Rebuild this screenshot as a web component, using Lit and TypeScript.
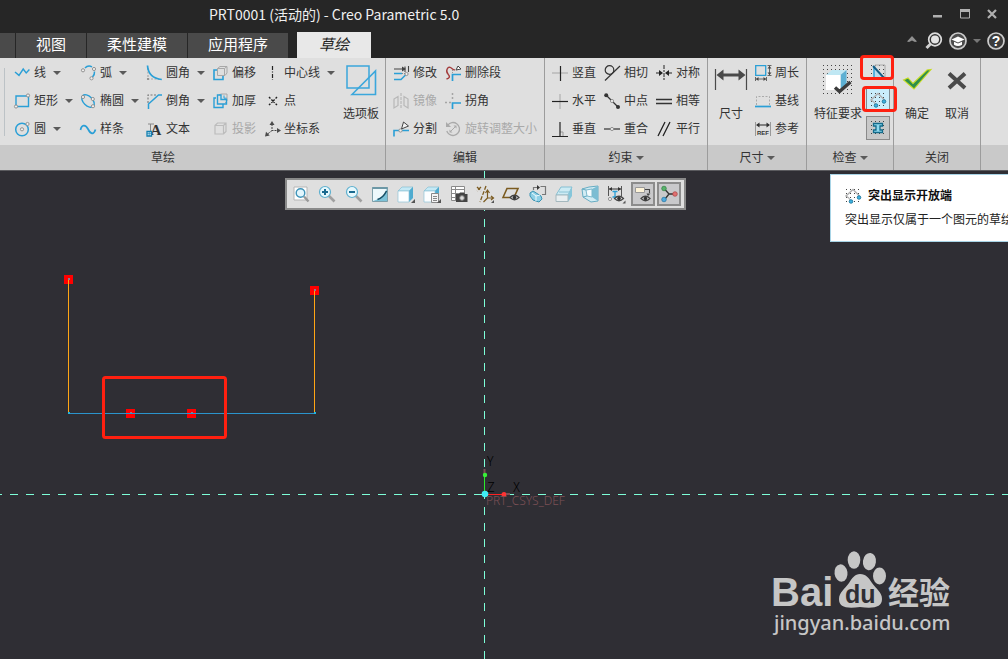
import { LitElement, html, svg, css, nothing } from "lit";
import { customElement } from "lit/decorators.js";
import { classMap } from "lit/directives/class-map.js";

const BLUE = "#2a9fd6";
const GREY = "#a8a8a8";
const DARK = "#4a4a4a";

const handle = (x: number, y: number) =>
  svg`<circle cx=${x} cy=${y} r="1.6" fill="#eee" stroke="#8a8a8a" stroke-width="0.9"/>`;

const dots = (n: number, step: number, start = 1) => {
  const out = [];
  for (let r = 0; r < n; r++)
    for (let c = 0; c < n; c++)
      out.push(svg`<rect x=${start + c * step} y=${start + r * step} width="1" height="1" fill="#444"/>`);
  return out;
};

const openEnds = svg`${dots(4, 4, 1)}
  <path d="M3 9.5 1 8 8 1.5 14 7.5V9" fill="none" stroke="#b0b0b0" stroke-width="1.4"/>
  <path d="M3 9l3 4" stroke="#b0b0b0" stroke-width="1.2"/>
  <circle cx="6" cy="13.5" r="1.8" fill="#3fb2e0" stroke="#156f96" stroke-width="0.8"/>
  <circle cx="14" cy="9.5" r="1.8" fill="#3fb2e0" stroke="#156f96" stroke-width="0.8"/>`;

const cube = svg`<path d="M1 5 5 1h11l-4 4z" fill="#c5e9f5" stroke="#7ab9cf" stroke-width="0.6"/>
  <path d="M12 5l4-4v11l-4 4z" fill="#4fabcf"/>
  <path d="M1 5h11v11H1z" fill="#fcfeff" stroke="#8fc4d8" stroke-width="0.7"/>`;

const more = svg`<path d="M18 14v4h-4z" fill="#555"/>`;
const eye = (x: number, y: number) => svg`<g transform="translate(${x} ${y})">
  <path d="M0 3.5Q4.5-1 9 3.5 4.5 8 0 3.5z" fill="#ddd" stroke="#444" stroke-width="1.2"/>
  <circle cx="4.5" cy="3.5" r="1.8" fill="#333"/></g>`;

const icons: Record<string, unknown> = {
  line: svg`<path d="M1 7l4 3.4L9.2 4l3 4 3.2-3.4" fill="none" stroke=${BLUE} stroke-width="1.4"/>`,
  rect: svg`<path d="M2 3h12.5v10.5H2z" fill="none" stroke=${BLUE} stroke-width="1.4"/>${handle(14, 2.5)}${handle(2, 13.5)}`,
  circle: svg`<circle cx="8" cy="8.5" r="6.3" fill="none" stroke=${BLUE} stroke-width="1.5"/>${handle(8, 8.3)}${handle(13.5, 3)}`,
  arc: svg`<path d="M5 3C7 .8 10 .8 12 1.800M14.500 6.500C14.800 9 13.800 10.500 12.500 12" fill="none" stroke=${BLUE} stroke-width="1.5"/>
    ${handle(3, 5.3)}${handle(14, 4)}${handle(11.5, 13.3)}`,
  ellipse: svg`<ellipse cx="8" cy="8" rx="7.6" ry="4.6" transform="rotate(45 8 8)" fill="none" stroke=${BLUE} stroke-width="1.4"/>
    ${handle(3, 4)}${handle(13, 13.2)}${handle(12.8, 6)}`,
  spline: svg`<path d="M.5 9C1.5 3.5 5.5 3 8 8s5.500 6.500 7.500.5" fill="none" stroke=${BLUE} stroke-width="1.7"/>`,
  fillet: svg`<path d="M2 3v11h11" fill="none" stroke=${GREY} stroke-width="1.2" stroke-dasharray="2 1.5"/>
    <path d="M1.5.5C2 8.5 7 13.5 15.8 14.5" fill="none" stroke=${BLUE} stroke-width="1.7"/>
    <circle cx="2" cy="14" r="1.1" fill="#888"/>`,
  chamfer: svg`<path d="M2 10V2h9" fill="none" stroke="#777" stroke-width="1.1" stroke-dasharray="2 1.5"/>
    <path d="M16 2h-3.500L2.500 11v5" fill="none" stroke=${BLUE} stroke-width="1.5"/>`,
  text: svg`<path d="M2 3h6M4.500 3v8" fill="none" stroke="#888" stroke-width="1"/>
    <text x="4.5" y="13.5" font-family="Liberation Serif, serif" font-weight="700" font-size="15" fill="#333">A</text>
    <path d="M1 10.500h4.500V15H1z" fill="#eaf8ff" stroke="#127fb0" stroke-width="1.3"/><path d="M3.200 10.500V15M1 12.700h4.500" stroke="#127fb0" stroke-width=".7"/>`,
  offset: svg`<path d="M5.500 3.500 8 1.500h7v6.500l-2 2.500H5.500zM5.500 3.500h7v7M12.500 3.500 15 1.500" fill="none" stroke=${GREY}/>
    <path d="M5 5H2v9.500h9V11" fill="none" stroke=${BLUE} stroke-width="1.6"/>`,
  thicken: svg`<path d="M7 2 9 1h6v7l-2 2" fill="none" stroke=${GREY}/>
    <path d="M4 5H2v9.500h9v-3M9 2H5.500v9h9V6.500H9z" fill="none" stroke=${BLUE} stroke-width="1.4"/>
    <path d="M12 2.500v2.700h2.700" fill="none" stroke=${BLUE}/>`,
  project: svg`<path d="M3 4.500 5.500 2H14v8.500L11.500 13H3zM3 4.500h8.500V13M11.500 4.500 14 2" fill="none" stroke="#bcbcbc" stroke-width="1.2"/>`,
  centerline: svg`<path d="M8.500 1v14" stroke="#222" stroke-width="1.2" stroke-dasharray="4 1.5 1 1.5"/>`,
  point: svg`<path d="M5 4l8 8M13 4l-8 8" stroke="#222" stroke-width="1.4" stroke-dasharray="2 1.4 4.6 1.4"/>`,
  csys: svg`<path d="M8 3v6.500h5M8 9.500l-5 4" fill="none" stroke="#444" stroke-dasharray="2 1"/>
    <path d="M8 0l2.500 4h-5zM17 9.500l-4-2.500v5zM1 15.500l1-4.700 3.700 3.700z" fill=${DARK}/>`,
  modify: svg`<path d="M1 4h11M12 1.500v5.500M15.500 1v6" stroke="#444" stroke-width="1.1"/><path d="M9 1.500 13 4 9 6.500z" fill="#444"/>
    <path d="M1 8.500h8M1 14.500h7l5-5" fill="none" stroke=${BLUE} stroke-width="1.5"/><path d="M9 8.500h6" stroke="#888" stroke-dasharray="1 1"/>${handle(13.5, 9)}`,
  mirror: svg`<path d="M1 6l4-2.500v9L1 15zM15 6l-4-2.500v9L15 15z" fill="none" stroke="#b8b8b8" stroke-width="1.2"/><path d="M8 0v16" stroke="#b0b0b0" stroke-dasharray="3 1"/>`,
  divide: svg`<path d="M1 15.500V9.500h5M9 9.500h7" fill="none" stroke=${BLUE} stroke-width="1.6"/>
    <path d="M8.500 8l2-7 5 4z" fill="#f3f3f3" stroke="#444"/>${handle(7.5, 9.5)}`,
  delseg: svg`<path d="M1.500 14c3-1 4-2 1.500-5-3-3 0-8 2.500-6.500 2 1.200 3 3 4.500 2.200" fill="none" stroke="#a33c3c" stroke-width="1.4"/>
    <path d="M11 5l2-4 3 3z" fill="#fff" stroke="#444"/><path d="M7.500 16V9.500H16" fill="none" stroke=${BLUE} stroke-width="1.7"/><path d="M7.500 8V4" stroke="#999" stroke-dasharray="1 1"/>`,
  corner: svg`<path d="M0 9.500h6M7.500 0v8" stroke="#a5a5a5" stroke-width="1.5" stroke-dasharray="2 2"/><path d="M7.500 16V10H16" fill="none" stroke=${BLUE} stroke-width="1.7"/>`,
  rotate: svg`<circle cx="8" cy="8" r="6.5" fill="none" stroke="#aaa" stroke-width="1.3" stroke-dasharray="34 7" transform="rotate(215 8 8)"/>
    <path d="M1 1v5h5z" fill="#aaa"/><path d="M5.500 10.500l5-5" stroke="#aaa"/><path d="M8.500 4.500h3v3zM4.500 8.500v3h3z" fill="#aaa"/>`,
  vertical: svg`<path d="M0 8h16" stroke="#b8b8b8" stroke-width="1.5"/><path d="M8.500 1v15" stroke="#222" stroke-width="1.2"/>`,
  horizontal: svg`<path d="M8 1v15" stroke="#b8b8b8" stroke-width="1.5"/><path d="M0 8.500h16" stroke="#222" stroke-width="1.2"/>`,
  perp: svg`<path d="M8 11h3v4" fill="none" stroke="#999"/><path d="M8 1v14M0 15.500h16" stroke="#222" stroke-width="1.2"/>`,
  tangent: svg`<circle cx="5.5" cy="5" r="4.3" fill="none" stroke="#333" stroke-width="1.2"/><path d="M1 15.500 16 1" stroke="#333" stroke-width="1.2"/>`,
  midpoint: svg`<path d="M2 2l12 12" stroke="#333" stroke-width="1.2"/><circle cx="2.2" cy="2.2" r="2" fill="#333"/><circle cx="14" cy="14" r="2" fill="#333"/>${handle(8, 8)}`,
  coincident: svg`<path d="M0 8h16" stroke="#333" stroke-width="1.2"/>${handle(8, 8)}`,
  symmetric: svg`<path d="M8 0v16" stroke="#222" stroke-dasharray="4 1 2 1"/><path d="M0 8h4M12 8h4" stroke="#222" stroke-width="1.2"/><path d="M3 5l4 3-4 3zM13 5 9 8l4 3z" fill="#222"/>`,
  equal: svg`<path d="M0 6.500h16M0 10.500h16" stroke="#333" stroke-width="1.3"/>`,
  parallel: svg`<path d="M2 15 9 1M7 15l7-14" stroke="#222" stroke-width="1.3"/>`,
  perimeter: svg`<path d="M.7.700h10v9.600H.7z" fill="none" stroke=${BLUE} stroke-width="1.3"/>
    <path d="M14.500 1v9M12.500.5h4M12.500 10.500h4M1 14h10M.5 12v4M11.500 12v4" stroke="#666"/><path d="M14.500 1l2 2.500h-4zM14.500 10l2-2.500h-4zM1 14l2.500-2v4zM11 14l-2.500-2v4z" fill="#444"/>`,
  baseline: svg`<path d="M1.500 12V3.500h13V12" fill="none" stroke="#aaa" stroke-dasharray="2 1.5"/><path d="M0 13.500h16" stroke=${BLUE} stroke-width="1.7"/>`,
  ref: svg`<path d="M.5 1v14M15.500 1v14" stroke="#999"/><path d="M2 4h12" stroke="#333" stroke-width="1.1"/><path d="M1 4l3.500-2.500v5zM15 4l-3.500-2.500v5z" fill="#333"/>
    <text x="8" y="14" text-anchor="middle" font-family="Liberation Sans, sans-serif" font-weight="700" font-size="6" fill="#333">REF</text>`,
  palette: svg`<g transform="translate(1 1)"><path d="M1 1h22v22H1z" fill="none" stroke="#3ba7dc" stroke-width="1.5"/><path d="M6 29.500 29.500 6v23.500z" fill="none" stroke="#3ba7dc" stroke-width="1.6"/></g>`,
  dimension: svg`<path d="M.5 5v21M31.500 5v21" stroke=${DARK} stroke-width="1.2"/><path d="M6 11h20" stroke=${DARK} stroke-width="3"/><path d="M1.500 11l7-5.500v11zM30.500 11l-7-5.500v11z" fill=${DARK}/>`,
  feature: svg`${dots(8, 4, 1)}<path d="M4 11l6-5h14.500L18.500 11z" fill="#bfe7f3"/><path d="M18.500 11l6-5v14l-6 6z" fill="#5cb0d3"/><path d="M4 11h14.500v15H4z" fill="#fff"/>
    <path d="M13 23.500l4.500 4L28.500 18" fill="none" stroke="#3c3c3c" stroke-width="3.4"/>`,
  shade: svg`${dots(4, 4, 1)}<path d="M5 1h10v12H5z" fill="none" stroke="#aaa"/><path d="M4 3l11 12H4z" fill="#b8dcec"/><path d="M4 2v13h11" fill="none" stroke="#3ba7dc" stroke-width="1.6"/><path d="M3 2l12 13" stroke="#145d85" stroke-width="1.9"/>`,
  openEnds,
  overlap: svg`${dots(4, 4, 1)}<path d="M3.500 3.500h9v2.500h-2.500v4h2.500v2.500h-9V10H6V6H3.500z" fill="#8fd9ee" stroke="#146c8c" stroke-width="1.3"/>`,
  ok: svg`<path d="M.5 16l4.500-2 5 5.500L24 6l4-.5L11 25z" fill="#2f8f4c" stroke="#c8dc20" stroke-width="1.1"/>`,
  cancel: svg`<path d="M6 9.500l16 14.500M22 9.500L6 24" stroke=${DARK} stroke-width="4"/>`,
  refit: svg`<path d="M2 2h13v13H2z" fill="#fff" stroke="#b5b5b5"/><circle cx="8.5" cy="8" r="4.3" fill="#e3f6fd" stroke="#3f93b8" stroke-width="1.4"/><path d="M12 11.500l4.500 5" stroke="#999" stroke-width="2.4"/>`,
  zoomIn: svg`<path d="M10.500 10.500l6 6" stroke="#a0a0a0" stroke-width="2.6"/><circle cx="7" cy="7" r="5.5" fill="#e6f8fd" stroke="#5fb0cf" stroke-width="1.2"/><path d="M4 7h6M7 4v6" stroke="#1a6a90" stroke-width="2"/>`,
  zoomOut: svg`<path d="M10.500 10.500l6 6" stroke="#a0a0a0" stroke-width="2.6"/><circle cx="7" cy="7" r="5.5" fill="#e6f8fd" stroke="#5fb0cf" stroke-width="1.2"/><path d="M4 7h6" stroke="#1a6a90" stroke-width="2"/>`,
  repaint: svg`<path d="M1.500 2.500h15v14h-15z" fill="#7cc2d8" stroke="#7f9fa9"/><path d="M2 3h14Q14 13 2 16z" fill="#edf8fb"/><path d="M1.500 2h15v2h-15z" fill="#6d98a6"/><path d="M6.500 14.500Q12 13 15.500 6" fill="none" stroke="#174f66" stroke-width="1.6"/>`,
  display: svg`<g transform="translate(0 1)">${cube}</g>${more}`,
  saved: svg`<g transform="translate(0 1)">${cube}</g><path d="M8.500 8.500h7v9h-7z" fill="#f5f5f5" stroke="#888"/><path d="M10 11.500h4M10 13.500h4M10 15.500h4" stroke="#888"/>${more}`,
  viewMgr: svg`<path d="M1.500 1.500h13v14h-13z" fill="#fff" stroke="#8a8a8a"/><path d="M1.500 4.500h13M1.500 8.500h13M1.500 12.500h13M5.500 1.500v14" stroke="#8a8a8a"/><path d="M6 9h3l1-1.500h4L15 9h2.500v8H6z" fill="#444"/><circle cx="12" cy="13" r="2.4" fill="#ddd" stroke="#777"/>`,
  datum: svg`<path d="M1 2l4 4M5 2 1 6M10 1 4 17" stroke="#7b5b20" stroke-width="1.3" fill="none" stroke-dasharray="4 1.5"/><path d="M11.500 6v7h5M11.500 13l-4 4M9.500 8l2-3 2 3M15 11l2.500 2-2.500 2" stroke="#7b5b20" stroke-width="1.2" fill="none"/><path d="M18 15v3h-3z" fill="#555"/>`,
  planeTag: svg`<path d="M1 12.500 5 3.500h11l-4 9z" fill="none" stroke="#7b5b20" stroke-width="1.6"/>${eye(8, 9)}`,
  orient: svg`<path d="M11.500 1.500h5v8H13M4.500 5V2.500h4" fill="none" stroke="#777" stroke-width="1.2"/><path d="M8 0l3 2.500L8 5z" fill="#333"/><path d="M1 8l3-2 8 5 1 3-3 3-6-2-3-4z" fill="#8fd0e6" stroke="#3a93b2"/><path d="M3 8l4 3v5M7 11l4-1" fill="none" stroke="#effafd"/>`,
  section: svg`<path d="M1 10 6 2h11l-4 8z" fill="#cdebf4" stroke="#85bfd2"/><path d="M13 10l4-8v9l-4 6z" fill="#86c6da"/><path d="M1 10h12v6.500H1z" fill="#e8eef0" stroke="#a5b8be"/><path d="M4 7h11" stroke="#8ac3d5"/>`,
  persp: svg`<path d="M1 4 8 2l9-1v15l-7 1-8-5z" fill="#d2ecf4" stroke="#67acc3"/><path d="M11 4l6-3v15l-6-4z" fill="#7cbdd3"/><path d="M5 5l6-1v8l-5-1z" fill="#f4fbfd" stroke="#7db9cc"/><path d="M1 4l4 1M2 12l4-1" stroke="#67acc3"/>`,
  dimTag: svg`<path d="M1.500 1v10M14.500 1v10" stroke="#555"/><path d="M2 4h12" stroke="#333"/><path d="M2 4l3-2v4zM14 4l-3-2v4z" fill="#333"/><path d="M8 6v6M5.500 6.500h5M5.500 12h5" stroke="#2a9fd6" stroke-width="1.3"/>${handle(3, 14)}${eye(7.5, 10)}<path d="M18.500 15.500v3h-3z" fill="#555"/>`,
  noteTag: svg`<path d="M1.500 2.500h9v5h-9z" fill="#fdf3d8" stroke="#999"/><path d="M11 4.500h4.500V8" fill="none" stroke="#444" stroke-width="1.1"/><path d="M12.500 8.500h4L14 11z" fill="#444"/>${eye(7, 10)}`,
  spin: svg`<path d="M9 9 5 4.500M9 9h6M9 9l-4 5" stroke="#333" stroke-width="1.3"/><circle cx="4" cy="3.5" r="2.3" fill="#57b26a" stroke="#2f7d41" stroke-width=".7"/><circle cx="15" cy="9" r="2.3" fill="#e07070" stroke="#a94444" stroke-width=".7"/><circle cx="4" cy="14.5" r="2.3" fill="#4fa9dd" stroke="#23739f" stroke-width=".7"/>`,
};

const icon = (name: string, width = 16, height = width) =>
  html`<svg class="icon" width=${width} height=${height} viewBox="0 0 ${width} ${height}" aria-hidden="true">${icons[name]}</svg>`;

const caret = html`<svg class="caret" width="8" height="4" viewBox="0 0 8 4" aria-hidden="true"><path d="M0 0h8L4 4z" fill="#5a5a5a"/></svg>`;

type Cmd = { i: string; t: string; menu?: boolean; off?: boolean };

const command = (c: Cmd) => html`<button class="cmd" ?disabled=${!!c.off}>
  ${icon(c.i)}<span>${c.t}</span>${c.menu ? caret : nothing}
</button>`;

const big = (name: string, label: string, width = 32) =>
  html`<button class="big">${icon(name, width, 32)}<span>${label}</span></button>`;

const sketch: Cmd[] = [
  { i: "line", t: "线", menu: true }, { i: "arc", t: "弧", menu: true }, { i: "fillet", t: "圆角", menu: true }, { i: "offset", t: "偏移" }, { i: "centerline", t: "中心线", menu: true },
  { i: "rect", t: "矩形", menu: true }, { i: "ellipse", t: "椭圆", menu: true }, { i: "chamfer", t: "倒角", menu: true }, { i: "thicken", t: "加厚" }, { i: "point", t: "点" },
  { i: "circle", t: "圆", menu: true }, { i: "spline", t: "样条" }, { i: "text", t: "文本" }, { i: "project", t: "投影", off: true }, { i: "csys", t: "坐标系" },
];
const edit: Cmd[] = [
  { i: "modify", t: "修改" }, { i: "delseg", t: "删除段" },
  { i: "mirror", t: "镜像", off: true }, { i: "corner", t: "拐角" },
  { i: "divide", t: "分割" }, { i: "rotate", t: "旋转调整大小", off: true },
];
const constrain: Cmd[] = [
  { i: "vertical", t: "竖直" }, { i: "tangent", t: "相切" }, { i: "symmetric", t: "对称" },
  { i: "horizontal", t: "水平" }, { i: "midpoint", t: "中点" }, { i: "equal", t: "相等" },
  { i: "perp", t: "垂直" }, { i: "coincident", t: "重合" }, { i: "parallel", t: "平行" },
];
const dims: Cmd[] = [{ i: "perimeter", t: "周长" }, { i: "baseline", t: "基线" }, { i: "ref", t: "参考" }];

const viewTools = [
  ["refit", "重新调整"], ["zoomIn", "放大"], ["zoomOut", "缩小"], ["repaint", "重画"], ["display", "显示样式"],
  ["saved", "已保存方向"], ["viewMgr", "视图管理器"], ["datum", "基准显示"], ["planeTag", "平面标记"], ["orient", "草绘视图"],
  ["section", "剪切"], ["persp", "透视图"], ["dimTag", "草绘器显示"], ["noteTag", "注释显示"], ["spin", "旋转中心"],
];

const base = css`
  :host { font-family: "Noto Sans", "Noto Sans CJK SC", sans-serif; }
  button { appearance: none; border: 0; background: none; padding: 0; margin: 0; font: inherit; color: inherit; }
  svg { display: block; flex: none; overflow: visible; }
`;

@customElement("creo-header")
export class CreoHeader extends LitElement {
  static styles = [base, css`
    :host { display: block; background: #262626; color: #f0f0f0; }
    .title { display: flex; align-items: center; height: 28px; padding: 0 11px 0 209px; }
    .title h1 { margin: 0; flex: 1; font-family: "Noto Sans CJK SC", sans-serif; font-size: 14px; line-height: 20px; font-weight: 400; white-space: nowrap; }
    .window { display: flex; gap: 17px; }
    .row { display: flex; align-items: flex-end; height: 30px; }
    .tab { height: 25px; padding: 0 20px 3px; margin-right: 1px; background: #4a4a4a; color: #fff; font-size: 15px; line-height: 22px; }
    .tab.cut { padding: 0; width: 15px; }
    .tab.active { height: 26px; margin-left: 8px; padding: 0 22px 2px; background: #e8e8e8; color: #222; font-style: italic; }
    .tools { display: flex; gap: 6px; align-items: center; margin-left: auto; padding: 0 3px 8px 0; }
  `];
  render() {
    return html`
      <header class="title">
        <h1>PRT0001 (活动的) - Creo Parametric 5.0</h1>
        <div class="window">
          <button aria-label="最小化"><svg width="10" height="10"><path d="M0 6h9v2.500H0z" fill="#b0b0b0"/></svg></button>
          <button aria-label="最大化"><svg width="10" height="10"><path d="M.5.500h9v8.500h-9z" fill="none" stroke="#b0b0b0"/><path d="M0 0h10v3H0z" fill="#b0b0b0"/></svg></button>
          <button aria-label="关闭窗口"><svg width="10" height="10"><path d="M1 1l8 8M9 1 1 9" stroke="#b0b0b0" stroke-width="2.2"/></svg></button>
        </div>
      </header>
      <nav class="row">
        <button class="tab cut" aria-label="上一选项卡"></button>
        <button class="tab">视图</button><button class="tab">柔性建模</button><button class="tab">应用程序</button>
        <button class="tab active">草绘</button>
        <div class="tools">
          <button aria-label="折叠功能区"><svg width="14" height="18"><path d="M2 9.500 7 4l5 5.500-2 .5-3-1.500L4 10z" fill="#909090"/></svg></button>
          <button aria-label="搜索"><svg width="18" height="18"><path d="M6 11.500 1.500 16" stroke="#d0d0d0" stroke-width="3"/><circle cx="10" cy="7.5" r="6.3" fill="#333" stroke="#ddd" stroke-width="1.7"/><circle cx="10" cy="7.5" r="4" fill="#e4e4e4"/></svg></button>
          <button aria-label="学习"><svg width="18" height="18"><circle cx="9" cy="9" r="8" fill="#4c4c4c" stroke="#ccc" stroke-width="1.7"/><path d="M2.500 7.500 9 4.500l6.500 3L9 10.500z" fill="#fff"/><path d="M5 9.700v3q4 2.500 8 0v-3l-4 1.800z" fill="#fff"/></svg></button>
          <button aria-label="更多"><svg width="8" height="4"><path d="M0 0h8L4 4z" fill="#777"/></svg></button>
          <button aria-label="帮助"><svg width="18" height="18"><circle cx="9" cy="9" r="8" fill="#3c3c3c" stroke="#ccc" stroke-width="1.7"/><text x="9" y="14" text-anchor="middle" font-family="Liberation Sans, sans-serif" font-weight="700" font-size="14" fill="#fff">?</text></svg></button>
        </div>
      </nav>`;
  }
}

@customElement("creo-ribbon")
export class CreoRibbon extends LitElement {
  static styles = [base, css`
    :host { display: flex; background: #dfdfdf; color: #333; font-size: 12px; line-height: 16px; border-bottom: 1px solid #5a5a5e; }
    .group { display: flex; flex-direction: column; border-right: 1px solid #9c9c9c; }
    .group.rest { flex: 1; border: 0; }
    .body { display: flex; box-sizing: border-box; height: 87px; padding: 1px 7px 0; }
    .body.sketch { padding: 1px 6px 0 4px; }
    .body.inspect { padding: 1px 3px 0 7px; gap: 4px; position: relative; }
    .body.dim { gap: 8px; }
    .body.close { padding: 1px 9px 0; gap: 12px; }
    .rule { width: 1px; margin: 9px 9px 9px 0; background: #bcc2c6; }
    .label { display: flex; align-items: center; justify-content: center; gap: 3px; height: 25px; background: #c9c9c9; }
    .label.wide { padding-right: 59px; }
    .label .caret { margin: 0; }
    .grid { display: grid; grid-auto-rows: 28px; }
    .grid.five { grid-template-columns: 66px 66px 66px 52px 79px; }
    .grid.two { grid-template-columns: 52px auto; }
    .grid.three { grid-template-columns: 52px 52px auto; }
    .cmd { display: flex; align-items: center; gap: 4px; white-space: nowrap; }
    .cmd:disabled { color: #a9a9a9; }
    .caret { margin-left: 3px; }
    .big { display: flex; flex-direction: column; align-items: center; align-self: flex-start; gap: 10px; padding-top: 5px; white-space: nowrap; }
    .checks { display: flex; flex-direction: column; gap: 4px; padding-top: 1px; }
    .check { display: grid; place-items: center; box-sizing: border-box; width: 24px; height: 24px; }
    .check.on { border: 1px solid #7f8a90; background: #c9edfb; }
    .check.pressed { border: 1px solid #8a8a8a; background: #c8c8c8; }
    .mark { position: absolute; box-sizing: border-box; border: 3px solid #ff2010; border-radius: 4px; pointer-events: none; }
    .mark.first { right: -1px; top: -3px; width: 34px; height: 25px; }
    .mark.second { right: -4px; top: 28px; width: 35px; height: 26px; }
  `];
  render() {
    return html`
      <section class="group">
        <div class="body sketch"><div class="rule"></div><div class="grid five">${sketch.map(command)}</div>
          ${big("palette", "选项板")}</div>
        <div class="label wide">草绘</div>
      </section>
      <section class="group"><div class="body"><div class="grid two">${edit.map(command)}</div></div><div class="label">编辑</div></section>
      <section class="group"><div class="body"><div class="grid three">${constrain.map(command)}</div></div><div class="label">约束${caret}</div></section>
      <section class="group"><div class="body dim">${big("dimension", "尺寸")}<div class="grid">${dims.map(command)}</div></div><div class="label">尺寸${caret}</div></section>
      <section class="group">
        <div class="body inspect">${big("feature", "特征要求")}
          <div class="checks">
            <button class="check" aria-label="着色封闭环">${icon("shade")}</button>
            <button class="check on" aria-label="突出显示开放端">${icon("openEnds")}</button>
            <button class="check pressed" aria-label="重叠几何">${icon("overlap")}</button>
          </div>
          <div class="mark first"></div><div class="mark second"></div>
        </div>
        <div class="label">检查${caret}</div>
      </section>
      <section class="group"><div class="body close">${big("ok", "确定", 28)}${big("cancel", "取消", 28)}</div><div class="label">关闭</div></section>
      <section class="group rest"><div class="body"></div><div class="label"></div></section>`;
  }
}

@customElement("creo-canvas")
export class CreoCanvas extends LitElement {
  static styles = [base, css`
    :host { display: block; position: relative; overflow: hidden; background: #2f2e34; }
    .scene { position: absolute; inset: 0; width: 100%; height: 100%; }
    .axis { stroke: #7dffd8; stroke-dasharray: 8 8; }
    .glyph { font-family: "Noto Sans CJK SC", sans-serif; font-weight: 300; font-size: 13px; fill: #000; }
    .csys { font-family: "Noto Sans", sans-serif; font-weight: 300; font-size: 12px; fill: #7c5056; }
    .toolbar { position: absolute; left: 285px; top: 7px; display: flex; justify-content: space-between; align-items: center; box-sizing: border-box;
      width: 401px; height: 32px; padding: 0 3px 1px 2px; border: 2px solid #8a8a8a; background: #dfdfdf; }
    .tool { display: grid; place-items: center; box-sizing: border-box; width: 24px; height: 24px; }
    .tool.on { border: 2px solid #8c8c8c; background: #c9c9cb; }
    .tip { position: absolute; left: 830px; right: 0; top: 3px; height: 68px; padding: 13px 0 0 14px; box-sizing: border-box; overflow: hidden;
      border: 1px solid #a8d4e6; border-right: 0; background: #fff; color: #222; font-size: 12px; white-space: nowrap; }
    .tip h2 { display: flex; align-items: center; gap: 7px; margin: 0 0 8px; font-size: 12px; line-height: 16px; color: #111; }
    .tip p { margin: 0; line-height: 16px; }
    .brand { position: absolute; right: 56px; bottom: 20px; }
    .brand text { fill: #c6c6c6; }
    .name { font: 700 40px "Liberation Sans", sans-serif; }
    .han { font: 700 31px "Noto Sans CJK SC", sans-serif; }
    .site { font: 500 20px "Noto Sans", sans-serif; }
    .brand .du { font: 700 25px "Liberation Sans", sans-serif; fill: #2f2e34; }
  `];
  private square(x: number, y: number) {
    return svg`<rect x=${x} y=${y} width="9" height="9" fill="#f00"/><rect x=${x + 4} y=${y + 3} width="2" height="2" fill="#8a7f90"/>`;
  }
  render() {
    return html`
      <svg class="scene">
        <path class="axis" d="M484.500 0V1200"/>
        <path class="axis" d="M-6 323.500H2400"/>
        ${this.square(64, 104)}${this.square(310, 115)}${this.square(126, 238)}${this.square(187, 238)}
        <path d="M68.500 109V242M314.500 120V242" stroke="#ffa514" fill="none"/>
        <path d="M68 242.500H316" stroke="#2b94cc"/>
        <rect x="68" y="241" width="2" height="2" fill="#21b5e0"/><rect x="314" y="241" width="2" height="2" fill="#21b5e0"/>
        <rect x="103.500" y="206.500" width="122" height="60" rx="2" fill="none" stroke="#ff2010" stroke-width="3"/>
        <path d="M484.500 298v5" stroke="#7c5056" stroke-width="2"/>
        <path d="M484.500 304v19" stroke="#2bea2b"/><circle cx="485" cy="304" r="2.2" fill="#38f038"/>
        <path d="M485 323.500h19" stroke="#f22"/><circle cx="504" cy="323.500" r="2.5" fill="#f33"/><path d="M506 323h4" stroke="#7c5056" stroke-width="2"/>
        <circle cx="485" cy="323" r="3.3" fill="#3fecf4"/>
        <text class="glyph" x="487" y="295">Y</text><text class="glyph" x="487" y="321">Z</text><text class="glyph" x="513" y="321">X</text>
        <text class="csys" x="486" y="334">PRT_CSYS_DEF</text>
      </svg>
      <div class="toolbar" role="toolbar">
        ${viewTools.map(([name, label], n) => html`<button class=${classMap({ tool: true, on: n > 12 })} aria-label=${label}>${icon(name, 18)}</button>`)}
      </div>
      <aside class="tip">
        <h2>${icon("openEnds")}<span>突出显示开放端</span></h2>
        <p>突出显示仅属于一个图元的草绘</p>
      </aside>
      <svg class="brand" width="180" height="88" viewBox="0 0 180 88">
        <text class="name" x="-1" y="55">Bai</text>
        <g fill="#c6c6c6">
          <ellipse cx="69" cy="22" rx="6.5" ry="8.7" transform="rotate(-8 69 22)"/><ellipse cx="82" cy="9" rx="6.3" ry="8.7"/>
          <ellipse cx="97.5" cy="10.5" rx="6.5" ry="8.7" transform="rotate(8 97 10)"/><ellipse cx="107.5" cy="25" rx="6.5" ry="8.5"/>
          <path d="M88 23c6 0 9 4 12 9 4 6 10 9 10 16 0 8-8 10-22 8-14 2-21 0-21-8 0-7 6-10 10-16 3-5 6-9 11-9z"/>
        </g>
        <text class="du" x="73" y="52">du</text>
        <text class="han" x="116" y="53">经验</text>
        <text class="site" x="2" y="79">jingyan.baidu.com</text>
      </svg>`;
  }
}

@customElement("app-root")
export class AppRoot extends LitElement {
  static styles = css`
    :host { display: flex; flex-direction: column; height: 100vh; min-height: 400px; overflow: hidden; }
    creo-canvas { flex: 1; }
  `;
  render() {
    return html`<creo-header></creo-header><creo-ribbon></creo-ribbon><creo-canvas></creo-canvas>`;
  }
}
